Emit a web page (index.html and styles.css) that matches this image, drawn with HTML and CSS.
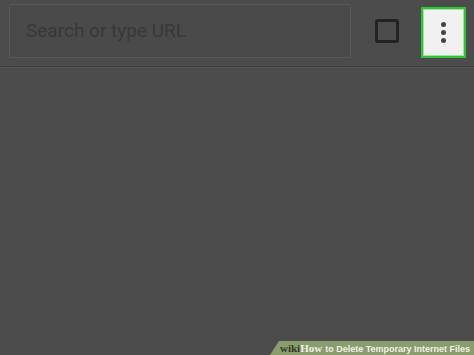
FILE: index.html
```html
<!DOCTYPE html>
<html lang="en">
<head>
    <meta charset="UTF-8">
    <title>How to Delete Temporary Internet Files</title>
    <link rel="stylesheet" href="styles.css">
</head>
<body>
    <div class="toolbar">
        <div class="search-box">Search or type URL</div>
        <div class="tabs-icon"></div>
        <div class="menu-button">
            <span class="dot"></span>
            <span class="dot"></span>
            <span class="dot"></span>
        </div>
    </div>
    <div class="page"></div>

    <div class="wiki-banner">
        <span class="wiki">wiki</span><span class="how">How</span><span class="title">to Delete Temporary Internet Files</span>
    </div>
</body>
</html>
```
FILE: styles.css
```css
body {
    margin: 0;
    padding: 0;
    width: 474px;
    height: 355px;
    background: #4b4b4b;
    font-family: Roboto, 'Liberation Sans', sans-serif;
    overflow: hidden;
    position: relative;
}

.toolbar {
    height: 66px;
    display: flex;
    align-items: flex-start;
    border-bottom: 1px solid #404040;
    box-shadow: 0 1px 0 #545454;
    background: #4c4c4c;
}

.search-box {
    margin: 4px 0 0 9px;
    width: 324px;
    height: 52px;
    padding-left: 16px;
    border: 1px solid #585858;
    border-radius: 2px;
    background: #4a4a4a;
    color: #383838;
    font-size: 19px;
    line-height: 52px;
}

.tabs-icon {
    margin: 19px 0 0 24px;
    width: 18px;
    height: 18px;
    border: 3px solid #222;
    border-radius: 3px;
}

.menu-button {
    margin: 7px 0 0 22px;
    width: 41px;
    height: 47px;
    background: #f1f1f1;
    border: 2px solid #33c23a;
    box-shadow: inset 0 0 0 1px #9be69b;
    display: flex;
    flex-direction: column;
    align-items: center;
    justify-content: center;
    gap: 3px;
}

.dot {
    width: 5px;
    height: 5px;
    border-radius: 50%;
    background: #444;
}

.wiki-banner {
    position: absolute;
    right: 0;
    bottom: 0;
    width: 194px;
    height: 14px;
    padding-left: 10px;
    background: #8b9d6f;
    clip-path: polygon(9px 0, 100% 0, 100% 100%, 0 100%);
    white-space: nowrap;
    line-height: 15px;
    font-size: 9px;
    font-weight: bold;
}

.wiki {
    font-family: 'Liberation Serif', serif;
    font-size: 11px;
    color: #2f3a26;
}

.how {
    font-family: 'Liberation Serif', serif;
    font-size: 11px;
    color: #eef2e6;
    margin-right: 3px;
}

.title {
    font-family: 'Liberation Sans', sans-serif;
    color: #eef2e6;
}
```
